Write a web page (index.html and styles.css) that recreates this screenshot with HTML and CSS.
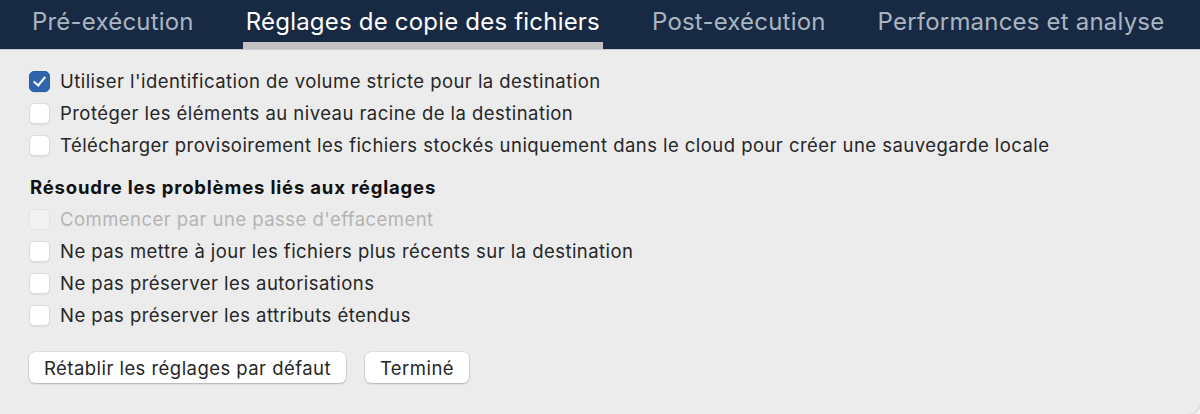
FILE: index.html
```html
<!DOCTYPE html>
<html>
<head>
    <meta charset="utf-8">
    <title>Réglages de copie des fichiers</title>
    <link rel="stylesheet" href="styles.css">
</head>
<body>
    <div class="fenetre">
        <div class="onglets">
            <span class="onglet">Pré-exécution</span>
            <span class="onglet actif">Réglages de copie des fichiers</span>
            <span class="onglet">Post-exécution</span>
            <span class="onglet">Performances et analyse</span>
        </div>

        <div class="contenu">
            <label class="option"><span class="case cochee"></span>Utiliser l'identification de volume stricte pour la destination</label>
            <label class="option"><span class="case"></span>Protéger les éléments au niveau racine de la destination</label>
            <label class="option"><span class="case"></span>Télécharger provisoirement les fichiers stockés uniquement dans le cloud pour créer une sauvegarde locale</label>

            <h2 class="section">Résoudre les problèmes liés aux réglages</h2>
            <label class="option inactif"><span class="case"></span>Commencer par une passe d'effacement</label>
            <label class="option"><span class="case"></span>Ne pas mettre à jour les fichiers plus récents sur la destination</label>
            <label class="option"><span class="case"></span>Ne pas préserver les autorisations</label>
            <label class="option"><span class="case"></span>Ne pas préserver les attributs étendus</label>

            <div class="boutons">
                <button class="bouton">Rétablir les réglages par défaut</button>
                <button class="bouton">Terminé</button>
            </div>
        </div>
    </div>
</body>
</html>
```

FILE: styles.css
```css
* {
    box-sizing: border-box;
    font-family: Inter, "Noto Sans", sans-serif;
}

body {
    margin: 0;
    background-color: #fafafa;
}

.fenetre {
    height: 414px;
    background-color: #ececec;
    border-bottom-right-radius: 12px;
    box-shadow: 1px 1px 2px rgba(0, 0, 0, .15);
    overflow: hidden;
}

.onglets {
    display: flex;
    gap: 46px;
    height: 50px;
    padding-left: 29px;
    background-color: #182a43;
    border-bottom: 1px solid #c9ccd0;
}

.onglet {
    padding: 7px 3px 0;
    font-size: 24px;
    letter-spacing: .2px;
    color: #aab5c2;
    white-space: nowrap;
}

.onglet.actif {
    color: #fff;
    border-bottom: 7px solid #c2c2c2;
}

.contenu {
    padding: 15px 29px 0;
    color: #262626;
}

.option {
    display: flex;
    align-items: center;
    gap: 10px;
    height: 32px;
    font-size: 18.5px;
    letter-spacing: .45px;
}

.case {
    width: 21px;
    height: 21px;
    border-radius: 5px;
    background-color: #fff;
    border: 1px solid #dcdcdc;
    box-shadow: 0 1px 1px rgba(0, 0, 0, .06);
    flex-shrink: 0;
}

.case.cochee {
    position: relative;
    background-color: #2f65ae;
    border-color: #2a5c9f;
}

.case.cochee::after {
    content: "";
    position: absolute;
    left: 6px;
    top: 2px;
    width: 5px;
    height: 10px;
    border: solid #fff;
    border-width: 0 2.5px 2.5px 0;
    transform: rotate(40deg);
}

.option.inactif {
    color: #b4b4b4;
}

.option.inactif .case {
    background-color: #f2f2f2;
    border-color: #e4e4e4;
    box-shadow: none;
}

.section {
    margin: 10px 0 0 1px;
    height: 32px;
    line-height: 32px;
    font-size: 18.5px;
    letter-spacing: .82px;
    font-weight: 700;
    color: #111;
}

.boutons {
    display: flex;
    gap: 19px;
    margin-top: 21px;
}

.bouton {
    height: 31px;
    padding: 0 15px;
    font-size: 18.5px;
    letter-spacing: .45px;
    color: #262626;
    background-color: #fff;
    border: none;
    border-radius: 6px;
    box-shadow: 0 0 0 .5px rgba(0, 0, 0, .12), 0 1px 2px rgba(0, 0, 0, .2);
}
```
